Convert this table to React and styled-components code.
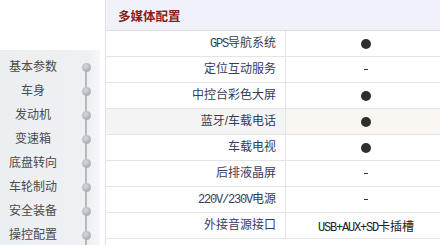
import React from "react";
import styled, { createGlobalStyle } from "styled-components";

const GlobalStyle = createGlobalStyle`
  html, body {
    margin: 0;
    padding: 0;
    background: #fff;
    overflow: hidden;
  }
  body {
    font-family: "Liberation Sans", "Noto Sans CJK SC", sans-serif;
  }
`;

const Page = styled.div`
  display: flex;
  width: 440px;
  height: 245px;
  overflow: hidden;
`;

const Sidebar = styled.div`
  width: 100px;
  flex: none;
  padding-top: 50px;
  margin-right: 5px;
`;

const Panel = styled.ul`
  list-style: none;
  margin: 0;
  padding: 5px 0 0 0;
  height: 190px;
  background: linear-gradient(to right, #eceff2 0%, #eef0f3 88%, #f6f7f9 100%);
`;

const NavItem = styled.li`
  display: flex;
  height: 24px;
  align-items: center;
`;

const NavLabel = styled.span`
  width: 66px;
  text-align: center;
  font-size: 12px;
  line-height: 24px;
  color: #4a4a4a;
`;

const Marker = styled.span`
  width: 34px;
  height: 24px;
  display: flex;
  align-items: center;
  background: linear-gradient(
    to right,
    transparent 19px,
    #b4b8c0 19px,
    #b4b8c0 21px,
    transparent 21px
  );
  background-position: 0 ${(p) => (p.$first ? "12px" : "0")};
  background-repeat: no-repeat;
`;

const Dot = styled.span`
  width: 9px;
  height: 9px;
  margin-left: 15.5px;
  border-radius: 50%;
  background: radial-gradient(circle at 40% 35%, #d4d7dc 0%, #b0b4bb 60%, #9a9fa7 100%);
`;

const Table = styled.div`
  width: 340px;
  flex: none;
  border-left: 1px solid #e2e2e2;
`;

const Header = styled.div`
  height: 30px;
  display: flex;
  align-items: center;
  padding-left: 12px;
  background: #f1f1fa;
  border-bottom: 1px solid #dcdcdc;
  font-size: 12.5px;
  font-weight: bold;
  color: #8a1c1c;
  font-family: "Noto Sans CJK SC", sans-serif;
`;

const Row = styled.div`
  display: flex;
  height: 25px;
  border-bottom: 1px solid #e4e4e4;
`;

const LabelCell = styled.div`
  width: 180px;
  box-sizing: border-box;
  padding-right: 9px;
  text-align: right;
  font-size: 12px;
  line-height: 25px;
  color: #363b5c;
  border-right: 1px solid #e4e4e4;
  background: ${(p) => (p.$hover ? "#f4f4f4" : "#fff")};
`;

const ValueCell = styled.div`
  flex: 1;
  display: flex;
  align-items: center;
  justify-content: center;
  font-size: 12px;
  color: #222;
  background: ${(p) => (p.$hover ? "#faf7f2" : "#fff")};
`;

const Latin = styled.span`
  font-family: "Liberation Mono", monospace;
  font-size: 12px;
  letter-spacing: -1.2px;
`;

const Bullet = styled.span`
  width: 10px;
  height: 10px;
  border-radius: 50%;
  background: #2e2e2e;
`;

const Dash = styled.span`
  width: 4px;
  height: 1px;
  background: #333;
`;

const navItems = [
  "基本参数",
  "车身",
  "发动机",
  "变速箱",
  "底盘转向",
  "车轮制动",
  "安全装备",
  "操控配置",
];

const rows = [
  { latin: "GPS", label: "导航系统", value: "yes" },
  { label: "定位互动服务", value: "no" },
  { label: "中控台彩色大屏", value: "yes" },
  { label: "蓝牙/车载电话", value: "yes", hover: true },
  { label: "车载电视", value: "yes" },
  { label: "后排液晶屏", value: "no" },
  { latin: "220V/230V", label: "电源", value: "no" },
  { label: "外接音源接口", value: { latin: "USB+AUX+SD", text: "卡插槽" } },
];

function renderValue(value) {
  if (value === "yes") return <Bullet />;
  if (value === "no") return <Dash />;
  return (
    <span>
      <Latin>{value.latin}</Latin>
      {value.text}
    </span>
  );
}

export default function App() {
  return (
    <Page>
      <GlobalStyle />
      <Sidebar>
        <Panel>
          {navItems.map((name, i) => (
            <NavItem key={name}>
              <NavLabel>{name}</NavLabel>
              <Marker $first={i === 0}>
                <Dot />
              </Marker>
            </NavItem>
          ))}
        </Panel>
      </Sidebar>
      <Table>
        <Header>多媒体配置</Header>
        {rows.map((r) => (
          <Row key={r.label}>
            <LabelCell $hover={r.hover}>
              {r.latin && <Latin>{r.latin}</Latin>}
              {r.label}
            </LabelCell>
            <ValueCell $hover={r.hover}>{renderValue(r.value)}</ValueCell>
          </Row>
        ))}
      </Table>
    </Page>
  );
}
